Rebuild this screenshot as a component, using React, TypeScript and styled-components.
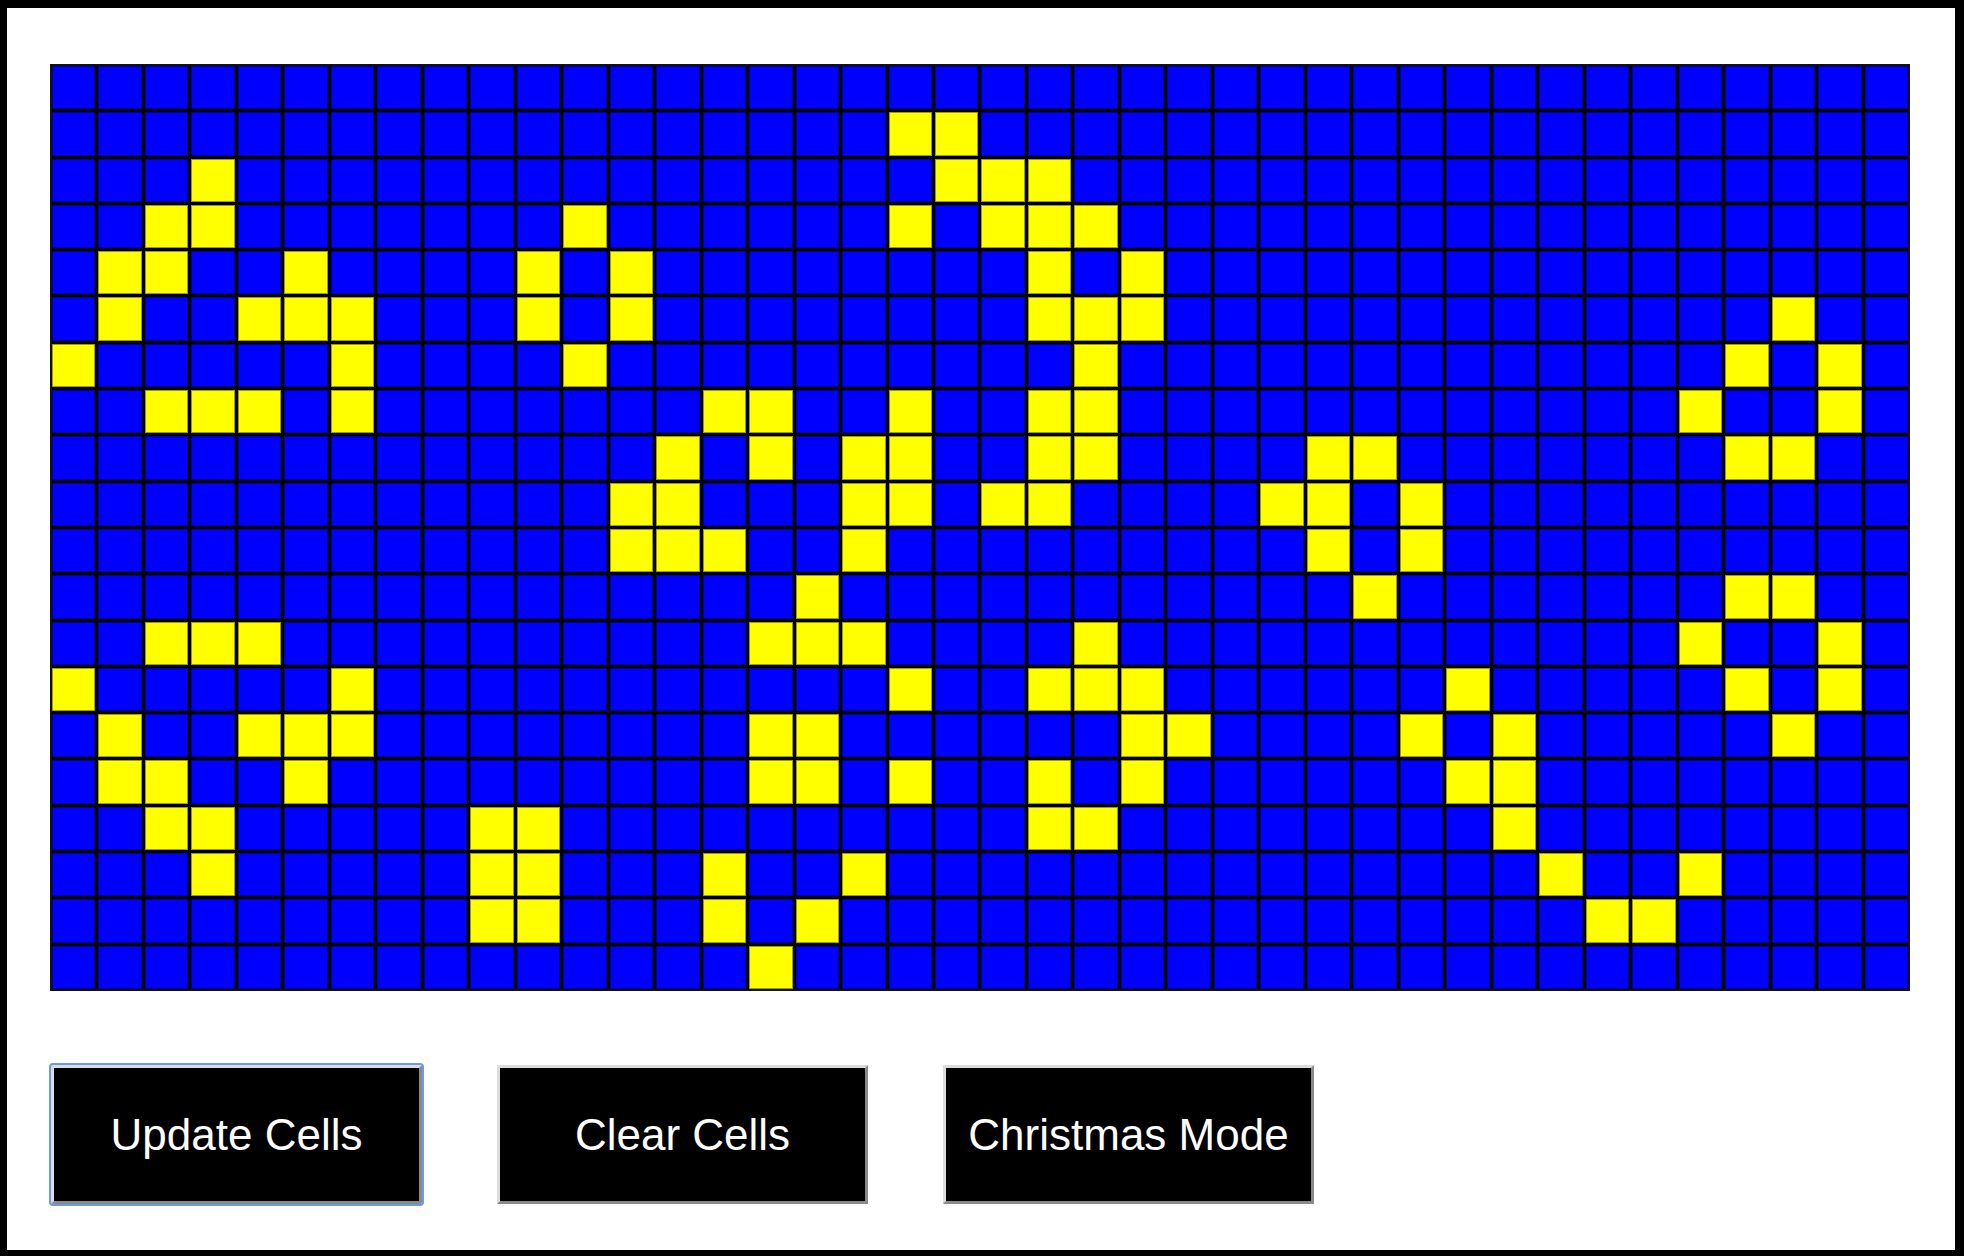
import styled, { createGlobalStyle } from 'styled-components';

const GlobalStyle = createGlobalStyle`
  html, body {
    margin: 0;
    padding: 0;
    background: #000;
  }
  #root {
    height: 100vh;
  }
`;

const COLS = 40;
const ROWS = 20;

// live cells per row (column indexes)
const LIVE: number[][] = [
  [],
  [18, 19],
  [3, 19, 20, 21],
  [2, 3, 11, 18, 20, 21, 22],
  [1, 2, 5, 10, 12, 21, 23],
  [1, 4, 5, 6, 10, 12, 21, 22, 23, 37],
  [0, 6, 11, 22, 36, 38],
  [2, 3, 4, 6, 14, 15, 18, 21, 22, 35, 38],
  [13, 15, 17, 18, 21, 22, 27, 28, 36, 37],
  [12, 13, 17, 18, 20, 21, 26, 27, 29],
  [12, 13, 14, 17, 27, 29],
  [16, 28, 36, 37],
  [2, 3, 4, 15, 16, 17, 22, 35, 38],
  [0, 6, 18, 21, 22, 23, 30, 36, 38],
  [1, 4, 5, 6, 15, 16, 23, 24, 29, 31, 37],
  [1, 2, 5, 15, 16, 18, 21, 23, 30, 31],
  [2, 3, 9, 10, 21, 22, 31],
  [3, 9, 10, 14, 17, 32, 35],
  [9, 10, 14, 16, 33, 34],
  [15],
];

const Frame = styled.div`
  box-sizing: border-box;
  height: 100%;
  background: #fff;
  border-style: solid;
  border-color: #000;
  border-width: 8px 9px 6px 7px;
  padding: 56px 45px 0 43px;
  font-family: 'Liberation Sans', Arial, sans-serif;
`;

const Board = styled.div`
  box-sizing: border-box;
  width: 1860px;
  height: 927px;
  display: grid;
  grid-template-columns: repeat(${COLS}, 1fr);
  grid-template-rows: repeat(${ROWS}, 1fr);
  gap: 3px;
  border: 2px solid #111;
  background: #000;
`;

const Cell = styled.div<{ $alive: boolean }>`
  background: ${p => (p.$alive ? '#ffff00' : '#0000ff')};
  box-shadow: inset 0 0 0 1px ${p => (p.$alive ? 'rgba(90, 90, 0, 0.6)' : 'rgba(0, 0, 90, 0.6)')};
`;

const Controls = styled.div`
  display: flex;
  gap: 75px;
  margin-top: 74px;
  padding-left: 1px;
`;

const ControlButton = styled.button<{ $focused?: boolean }>`
  box-sizing: border-box;
  width: 371px;
  height: 139px;
  padding: 0;
  background: #000;
  color: #fff;
  font-family: 'Liberation Sans', Arial, sans-serif;
  font-size: 44px;
  border-style: solid;
  border-width: 3px;
  border-color: #dcdcdc #8a8a8a #8a8a8a #dcdcdc;
  cursor: pointer;
  outline: ${p => (p.$focused ? '2px solid #6c9be6' : 'none')};
  outline-offset: 0;
  border-radius: ${p => (p.$focused ? '2px' : '0')};
`;

export default function App() {
  return (
    <>
      <GlobalStyle />
      <Frame>
        <Board>
          {Array.from({ length: ROWS }).map((_, r) =>
            Array.from({ length: COLS }).map((_, c) => (
              <Cell key={`${r}-${c}`} $alive={LIVE[r].includes(c)} />
            ))
          )}
        </Board>
        <Controls>
          <ControlButton $focused>Update Cells</ControlButton>
          <ControlButton>Clear Cells</ControlButton>
          <ControlButton>Christmas Mode</ControlButton>
        </Controls>
      </Frame>
    </>
  );
}
